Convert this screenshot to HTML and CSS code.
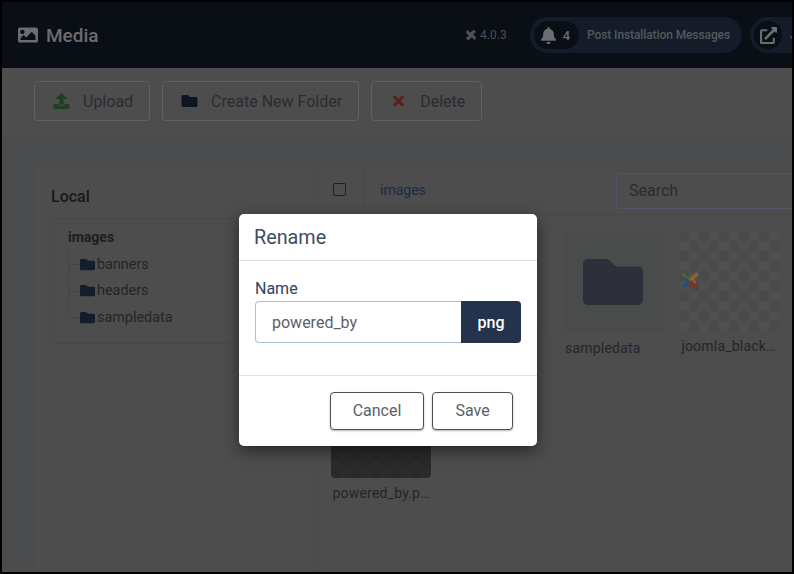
FILE: index.html
```html
<!DOCTYPE html>
<html lang="en">
<head>
    <meta charset="UTF-8">
    <title>Media</title>
    <link rel="stylesheet" href="styles.css">
</head>
<body>
    <div class="frame">
        <header class="topbar">
            <h1 class="page-title">
                <svg class="title-icon" viewBox="0 0 512 512"><path d="M464 448H48c-26.500 0-48-21.500-48-48V112c0-26.500 21.500-48 48-48h416c26.500 0 48 21.500 48 48v288c0 26.500-21.500 48-48 48zM112 120c-30.900 0-56 25.100-56 56s25.100 56 56 56 56-25.100 56-56-25.100-56-56-56zM64 384h384V272l-87.500-87.500c-4.700-4.700-12.300-4.700-17 0L208 320l-55.500-55.500c-4.700-4.700-12.300-4.700-17 0L64 336v48z"/></svg>
                Media
            </h1>
            <div class="version">
                <svg class="joomla-mini" viewBox="0 0 20 20"><path d="M3 3l6 6 2-2 4-4M17 3l-6 6 2 2 4 4M17 17l-6-6-2 2-4 4M3 17l6-6-2-2-4-4"/></svg>
                4.0.3
            </div>
            <div class="pill">
                <span class="pill-badge"><svg class="bell" viewBox="0 0 448 512"><path d="M224 512c35.300 0 64-28.700 64-64H160c0 35.300 28.700 64 64 64zm215.400-149.700c-19.300-20.800-55.500-52-55.500-154.300 0-77.700-54.500-139.900-127.900-155.200V32c0-17.700-14.300-32-32-32s-32 14.300-32 32v20.800C118.600 68.100 64.100 130.300 64.100 208c0 102.300-36.200 133.500-55.500 154.300-6 6.400-8.700 14.200-8.600 21.700.1 16.400 13 32 32.100 32h383.800c19.100 0 32-15.600 32.100-32 .1-7.500-2.600-15.300-8.600-21.700z"/></svg>4</span>
                <span class="pill-text">Post Installation Messages</span>
            </div>
            <div class="pill pill-cut">
                <span class="pill-round"><svg class="ext" viewBox="0 0 512 512"><path d="M432 320h-32a16 16 0 0 0-16 16v112H64V128h144a16 16 0 0 0 16-16V80a16 16 0 0 0-16-16H48a48 48 0 0 0-48 48v352a48 48 0 0 0 48 48h352a48 48 0 0 0 48-48V336a16 16 0 0 0-16-16zM488 0H360c-21.400 0-32 25.900-17 41l35.700 35.700L135 320.400a24 24 0 0 0 0 34l22.600 22.600a24 24 0 0 0 34 0L435.300 133.300 471 169c15 15 41 4.500 41-17V24a24 24 0 0 0-24-24z"/></svg></span>
                <span class="pill-text">J</span>
            </div>
        </header>

        <div class="toolbar">
            <button class="tool-btn">
                <svg class="tool-icon icon-green" viewBox="0 0 512 512"><path d="M296 384h-80c-13.300 0-24-10.700-24-24V192h-87.700c-17.800 0-26.700-21.500-14.100-34.100L242.300 5.700c7.500-7.500 19.800-7.500 27.300 0l152.200 152.200c12.600 12.600 3.700 34.100-14.100 34.100H320v168c0 13.300-10.700 24-24 24zm216-8v112c0 13.300-10.700 24-24 24H24c-13.300 0-24-10.700-24-24V376c0-13.300 10.700-24 24-24h136v8c0 30.900 25.100 56 56 56h80c30.900 0 56-25.100 56-56v-8h136c13.300 0 24 10.700 24 24z"/></svg>
                Upload
            </button>
            <button class="tool-btn">
                <svg class="tool-icon icon-navy" viewBox="0 0 512 512"><path d="M464 128H272l-64-64H48C21.490 64 0 85.490 0 112v288c0 26.510 21.490 48 48 48h416c26.510 0 48-21.490 48-48V176c0-26.510-21.490-48-48-48z"/></svg>
                Create New Folder
            </button>
            <button class="tool-btn">
                <svg class="tool-icon icon-red" viewBox="0 0 352 512"><path d="M242.720 256l100.070-100.070c12.280-12.280 12.280-32.190 0-44.480l-22.240-22.240c-12.280-12.280-32.190-12.280-44.480 0L176 189.280 75.930 89.210c-12.280-12.280-32.190-12.280-44.480 0L9.210 111.450c-12.280 12.280-12.280 32.190 0 44.480L109.280 256 9.210 356.070c-12.280 12.280-12.280 32.190 0 44.480l22.240 22.240c12.280 12.280 32.200 12.280 44.480 0L176 322.720l100.070 100.070c12.280 12.280 32.200 12.280 44.480 0l22.240-22.240c12.280-12.280 12.280-32.190 0-44.480L242.720 256z"/></svg>
                Delete
            </button>
        </div>

        <main class="content">
            <div class="media-card">
                <aside class="sidebar">
                    <h2 class="side-title">Local</h2>
                    <div class="tree">
                        <div class="tree-root">images</div>
                        <ul class="tree-list">
                            <li><svg class="tree-folder" viewBox="0 0 512 512"><path d="M464 128H272l-64-64H48C21.490 64 0 85.490 0 112v288c0 26.510 21.490 48 48 48h416c26.510 0 48-21.490 48-48V176c0-26.510-21.490-48-48-48z"/></svg>banners</li>
                            <li><svg class="tree-folder" viewBox="0 0 512 512"><path d="M464 128H272l-64-64H48C21.490 64 0 85.490 0 112v288c0 26.510 21.490 48 48 48h416c26.510 0 48-21.490 48-48V176c0-26.510-21.490-48-48-48z"/></svg>headers</li>
                            <li><svg class="tree-folder" viewBox="0 0 512 512"><path d="M464 128H272l-64-64H48C21.490 64 0 85.490 0 112v288c0 26.510 21.490 48 48 48h416c26.510 0 48-21.490 48-48V176c0-26.510-21.490-48-48-48z"/></svg>sampledata</li>
                        </ul>
                    </div>
                </aside>
                <section class="browser">
                    <div class="browser-bar">
                        <div class="check-cell"><span class="check"></span></div>
                        <div class="crumb">images</div>
                        <div class="search">Search</div>
                    </div>
                    <div class="grid">
                        <div class="item">
                            <div class="tile tile-folder"></div>
                            <div class="item-name">banners</div>
                        </div>
                        <div class="item">
                            <div class="tile tile-folder"></div>
                            <div class="item-name">headers</div>
                        </div>
                        <div class="item">
                            <div class="tile tile-folder">
                                <svg class="big-folder" viewBox="0 0 60 46"><path d="M5 0h18c1.500 0 2.800.6 3.800 1.600L33 7.500h22c2.800 0 5 2.200 5 5V41c0 2.800-2.200 5-5 5H5c-2.800 0-5-2.200-5-5V5c0-2.800 2.200-5 5-5z"/></svg>
                            </div>
                            <div class="item-name">sampledata</div>
                        </div>
                        <div class="item">
                            <div class="tile tile-image">
                                <svg class="joomla-logo" viewBox="0 0 20 20" fill="none" stroke-width="3.600" stroke-linecap="round" stroke-linejoin="round">
                                    <path stroke="#4a6438" d="M3.500 3.500l5 5 3-3"/>
                                    <path stroke="#8f6232" d="M16.500 3.500l-5 5 3 3"/>
                                    <path stroke="#7d3028" d="M16.500 16.500l-5-5-3 3"/>
                                    <path stroke="#2f4c6f" d="M3.500 16.500l5-5-3-3"/>
                                </svg>
                            </div>
                            <div class="item-name">joomla_black…</div>
                        </div>
                        <div class="item">
                            <div class="tile tile-dark"></div>
                            <div class="item-name">powered_by.p…</div>
                        </div>
                    </div>
                </section>
            </div>
        </main>

        <div class="modal">
            <div class="modal-head">Rename</div>
            <div class="modal-body">
                <label class="field-label">Name</label>
                <div class="input-group">
                    <div class="name-input">powered_by</div>
                    <div class="ext-tag">png</div>
                </div>
            </div>
            <div class="modal-foot">
                <button class="modal-btn btn-cancel">Cancel</button>
                <button class="modal-btn btn-save">Save</button>
            </div>
        </div>
    </div>
</body>
</html>
```

FILE: styles.css
```css
* {
    box-sizing: border-box;
}
html, body {
    margin: 0;
    height: 100%;
    background-color: #000;
}
body {
    font-family: Roboto, "Liberation Sans", sans-serif;
    overflow: hidden;
}
.frame {
    position: relative;
    width: 790px;
    height: 570px;
    margin: 2px;
    overflow: hidden;
    background-color: #494b4d;
    display: flex;
    flex-direction: column;
}

/* header */
.topbar {
    flex: none;
    height: 66px;
    background-color: #0a0e15;
    display: flex;
    align-items: center;
    padding-left: 16px;
    white-space: nowrap;
}
.page-title {
    margin: 0;
    flex: 1;
    display: flex;
    align-items: center;
    gap: 8px;
    color: #6b6d70;
    font-size: 19px;
    font-weight: 500;
}
.title-icon {
    width: 20px;
    height: 20px;
    fill: #6b6d70;
}
.version {
    display: flex;
    align-items: center;
    gap: 3px;
    color: #4c4f53;
    font-size: 12px;
    margin-right: 23px;
}
.joomla-mini {
    width: 12px;
    height: 12px;
    fill: none;
    stroke: #4c4f53;
    stroke-width: 4;
}
.pill {
    display: flex;
    align-items: center;
    height: 36px;
    background-color: #141c2a;
    border-radius: 18px;
    padding: 0 12px 0 4px;
    flex: none;
}
.pill-badge {
    display: flex;
    align-items: center;
    gap: 7px;
    height: 28px;
    padding: 0 9px 0 7px;
    background-color: #0a0e15;
    border-radius: 14px;
    color: #6b6d70;
    font-size: 13px;
    font-weight: 500;
}
.bell {
    width: 15px;
    height: 17px;
    fill: #6b6d70;
}
.pill-text {
    margin-left: 8px;
    color: #55585c;
    font-size: 12px;
    font-weight: 500;
    letter-spacing: -0.1px;
}
.pill-cut {
    margin-left: 8px;
    width: 42px;
    padding-right: 0;
    border-radius: 18px 0 0 18px;
    overflow: hidden;
}
.pill-round {
    flex: none;
    width: 28px;
    height: 28px;
    border-radius: 50%;
    background-color: #0a0e15;
    display: flex;
    align-items: center;
    justify-content: center;
}
.ext {
    width: 17px;
    height: 17px;
    fill: #6b6d70;
}

/* toolbar */
.toolbar {
    flex: none;
    height: 68px;
    background-color: #4d4d4d;
    display: flex;
    align-items: flex-start;
    gap: 12px;
    padding: 13px 0 0 32px;
}
.tool-btn {
    height: 40px;
    padding: 0 16px 0 18px;
    display: flex;
    align-items: center;
    gap: 13px;
    background: transparent;
    border: 1px solid #5f6163;
    border-radius: 4px;
    color: #2a2c30;
    font-family: inherit;
    font-size: 16px;
}
.tool-icon {
    width: 17px;
    height: 16px;
}
.icon-green { fill: #1d3f22; }
.icon-navy { fill: #0e1522; }
.icon-red { fill: #5e1e1a; }

/* media manager */
.content {
    flex: 1;
    min-height: 0;
    padding: 31px 0 0 32px;
}
.media-card {
    height: 100%;
    width: 800px;
    background-color: #4d4d4d;
    display: flex;
}
.sidebar {
    flex: none;
    width: 281px;
    padding: 20px 16px;
    border-right: 1px solid #46484a;
}
.side-title {
    margin: 0 0 12px;
    padding-left: 1px;
    font-size: 16px;
    line-height: 19px;
    font-weight: 500;
    color: #16181c;
}
.tree {
    height: 126px;
    width: 260px;
    border: 1px solid #464849;
    padding: 9px 17px;
}
.tree-root {
    font-size: 14px;
    font-weight: 700;
    line-height: 18px;
    color: #1c1e22;
}
.tree-list {
    list-style: none;
    margin: 5px 0 0;
    padding: 0 0 0 11px;
    border-left: 1px solid #424446;
    height: 63px;
}
.tree-list li {
    height: 26.500px;
    display: flex;
    align-items: center;
    font-size: 14.400px;
    color: #232529;
    position: relative;
}
.tree-list li::before {
    content: "";
    position: absolute;
    left: -11px;
    top: 50%;
    width: 11px;
    height: 1px;
    background-color: #424446;
}
.tree-folder {
    width: 15px;
    height: 15px;
    margin-right: 2px;
    fill: #141d2c;
}
.browser {
    flex: 1;
    min-width: 0;
}
.browser-bar {
    height: 48px;
    display: flex;
    border-bottom: 1px solid #46484a;
}
.check-cell {
    flex: none;
    width: 49px;
    padding: 0 0 2px 18px;
    display: flex;
    align-items: center;
    border-right: 1px solid #46484a;
}
.check {
    width: 13px;
    height: 13px;
    border: 1px solid #1e2024;
    border-radius: 2px;
    flex: none;
}
.crumb {
    flex: none;
    width: 252px;
    padding: 0 0 2px 16px;
    display: flex;
    align-items: center;
    font-size: 14px;
    color: #1b2c44;
}
.search {
    align-self: center;
    width: 300px;
    height: 36px;
    flex: none;
    border: 1px solid #50576a;
    border-radius: 4px;
    padding-left: 12px;
    display: flex;
    align-items: center;
    font-size: 16px;
    color: #2a2c30;
}
.grid {
    padding: 16px 0 0 15.500px;
    display: grid;
    grid-template-columns: repeat(4, 100px);
    column-gap: 16.300px;
    row-gap: 23px;
}
.item {
    width: 100px;
}
.tile {
    height: 102px;
    border-radius: 4px;
    display: flex;
    align-items: center;
    justify-content: center;
}
.tile-folder {
    background-color: #4a4c4c;
}
.big-folder {
    width: 60px;
    height: 46px;
    fill: #2d303a;
}
.tile-image {
    height: 100px;
    justify-content: flex-start;
    background-color: #4f4f4f;
    background-image: conic-gradient(#494a4a 25%, transparent 0 50%, #494a4a 0 75%, transparent 0);
    background-size: 20px 20px;
    background-position: 10px 0;
}
.joomla-logo {
    width: 20px;
    height: 20px;
    margin-left: 1px;
}
.tile-dark {
    height: 98px;
    background-color: #2b2b2b;
    background-image: conic-gradient(#292929 25%, transparent 0 50%, #292929 0 75%, transparent 0);
    background-size: 20px 20px;
}
.item-name {
    margin-top: 7px;
    padding-left: 2px;
    font-size: 14px;
    line-height: 17px;
    color: #232529;
    letter-spacing: 0.2px;
    white-space: nowrap;
}

/* rename dialog */
.modal {
    position: absolute;
    left: 237px;
    top: 212px;
    width: 298px;
    height: 232px;
    background-color: #fff;
    border-radius: 5px;
    box-shadow: 0 5px 15px rgba(0, 0, 0, 0.5);
    display: flex;
    flex-direction: column;
}
.modal-head {
    height: 47px;
    padding-left: 15px;
    display: flex;
    align-items: center;
    border-bottom: 1px solid #dee2e6;
    font-size: 19.800px;
    color: #3f4d63;
}
.modal-body {
    height: 115px;
    padding: 17px 16px 0;
    border-bottom: 1px solid #dee2e6;
}
.field-label {
    display: block;
    font-size: 16px;
    line-height: 21px;
    color: #2f4366;
    margin-bottom: 2px;
}
.input-group {
    display: flex;
    height: 42px;
}
.name-input {
    flex: 1;
    border: 1px solid #b2c0d6;
    border-right: 0;
    border-radius: 4px 0 0 4px;
    padding-left: 16px;
    display: flex;
    align-items: center;
    font-size: 16px;
    color: #5c6066;
}
.ext-tag {
    width: 60px;
    background-color: #24324b;
    border-radius: 0 4px 4px 0;
    display: flex;
    align-items: center;
    justify-content: center;
    color: #fff;
    font-size: 16px;
    font-weight: 500;
}
.modal-foot {
    flex: 1;
    display: flex;
    justify-content: flex-end;
    align-items: flex-start;
    gap: 8px;
    padding: 16px 24px 0 0;
}
.modal-btn {
    height: 38px;
    padding: 0 0 2px;
    background-color: #fff;
    border: 1px solid #495057;
    border-radius: 4px;
    box-shadow: 0 1px 2px rgba(0, 0, 0, 0.3);
    font-family: inherit;
    font-size: 16px;
    color: #5c6066;
}
.btn-cancel {
    width: 94px;
}
.btn-save {
    width: 81px;
}
```
